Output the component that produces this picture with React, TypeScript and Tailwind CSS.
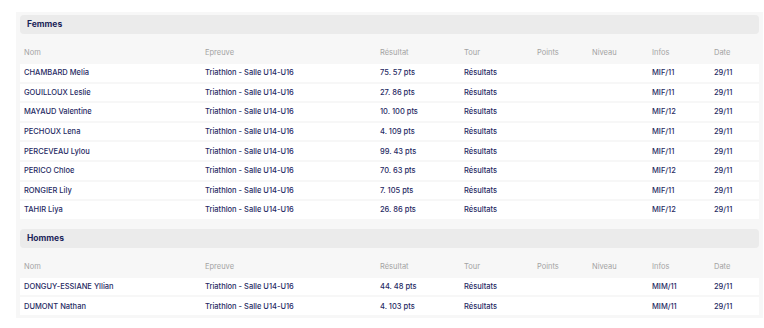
const femmes = [
  { nom: "CHAMBARD Melia", res: "75. 57 pts", infos: "MIF/11" },
  { nom: "GOUILLOUX Leslie", res: "27. 86 pts", infos: "MIF/11" },
  { nom: "MAYAUD Valentine", res: "10. 100 pts", infos: "MIF/12" },
  { nom: "PECHOUX Lena", res: "4. 109 pts", infos: "MIF/11" },
  { nom: "PERCEVEAU Lylou", res: "99. 43 pts", infos: "MIF/11" },
  { nom: "PERICO Chloe", res: "70. 63 pts", infos: "MIF/12" },
  { nom: "RONGIER Lily", res: "7. 105 pts", infos: "MIF/11" },
  { nom: "TAHIR Liya", res: "26. 86 pts", infos: "MIF/12" },
];

const hommes = [
  { nom: "DONGUY-ESSIANE Yllian", res: "44. 48 pts", infos: "MIM/11" },
  { nom: "DUMONT Nathan", res: "4. 103 pts", infos: "MIM/11" },
];

const cols = "grid grid-cols-[181px_175px_84px_73px_55px_60px_62px_1fr] px-[4px]";

type Row = { nom: string; res: string; infos: string };

function Section({ title, rows }: { title: string; rows: Row[] }) {
  return (
    <div className="flex flex-col">
      {/* titre */}
      <div className="h-[19px] rounded-[4px] bg-[#ebebeb] flex items-center px-[7px]">
        <h2 className="text-[8.5px] font-bold text-[#1b2559]">{title}</h2>
      </div>
      {/* entetes */}
      <div className={`${cols} h-[30px] pt-[9px] pb-[1px] items-center text-[7.5px] text-[#a3a3a3]`}>
        <p>Nom</p>
        <p>Epreuve</p>
        <p>Résultat</p>
        <p>Tour</p>
        <p>Points</p>
        <p>Niveau</p>
        <p>Infos</p>
        <p>Date</p>
      </div>
      <div className="flex flex-col gap-[2px]">
        {rows.map((r) => (
          <div
            key={r.nom}
            className={`${cols} h-[17.6px] items-center bg-white text-[7.5px] font-medium text-[#1f2a63]`}
          >
            <p>{r.nom}</p>
            <p>Triathlon - Salle U14-U16</p>
            <p>{r.res}</p>
            <p>Résultats</p>
            <p></p>
            <p></p>
            <p>{r.infos}</p>
            <p>29/11</p>
          </div>
        ))}
      </div>
    </div>
  );
}

export default function App() {
  return (
    <div
      className="w-[764px] h-[328px] bg-white pt-[12px] pl-[16px] pr-[1px]"
      style={{ fontFamily: "Inter, 'Noto Sans', sans-serif" }}
    >
      <div className="bg-[#f7f7f7] pt-[3px] pb-[3px] pl-[4px] pr-[4px] flex flex-col gap-[10px]">
        <Section title="Femmes" rows={femmes} />
        <Section title="Hommes" rows={hommes} />
      </div>
    </div>
  );
}
